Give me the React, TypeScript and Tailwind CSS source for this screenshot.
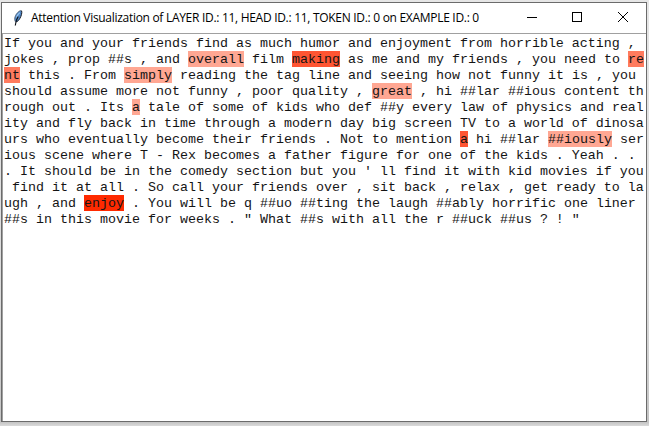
type Tone = "soft" | "mid" | "strong" | "full";
type Segment = string | [string, Tone];

const TONES: Record<Tone, string> = {
  soft: "bg-[#ffa793]",
  mid: "bg-[#ff7b5e]",
  strong: "bg-[#ff5533]",
  full: "bg-[#ff2a00]",
};

const LINES: Segment[][] = [
  ["If you and your friends find as much humor and enjoyment from horrible acting ,"],
  ["jokes , prop ##s , and ", ["overall", "soft"], " film ", ["making", "strong"], " as me and my friends , you need to ", ["re", "mid"]],
  [["nt", "mid"], " this . From ", ["simply", "soft"], " reading the tag line and seeing how not funny it is , you"],
  ["should assume more not funny , poor quality , ", ["great", "soft"], " , hi ##lar ##ious content th"],
  ["rough out . Its ", ["a", "soft"], " tale of some of kids who def ##y every law of physics and real"],
  ["ity and fly back in time through a modern day big screen TV to a world of dinosa"],
  ["urs who eventually become their friends . Not to mention ", ["a", "strong"], " hi ##lar ", ["##iously", "soft"], " ser"],
  ["ious scene where T - Rex becomes a father figure for one of the kids . Yeah . ."],
  [". It should be in the comedy section but you ' ll find it with kid movies if you"],
  [" find it at all . So call your friends over , sit back , relax , get ready to la"],
  ["ugh , and ", ["enjoy", "full"], " . You will be q ##uo ##ting the laugh ##ably horrific one liner"],
  ["##s in this movie for weeks . \" What ##s with all the r ##uck ##us ? ! \""],
];

function Feather() {
  return (
    <svg width="12" height="18" viewBox="0 0 12 18" className="shrink-0">
      <path d="M3.500 13C1.600 10 3 6 5.600 3.600 7.200 2 9 1 9.600 1.800c.6 2-.2 5-1.700 7.600-1.200 2-2.400 3.200-4.400 3.600z" fill="#4f86c6" />
      <path d="M3.200 12.500C1.800 9.500 3.400 6 5.800 3.400 7.400 1.800 8.800 1.200 9.500 1.800" fill="none" stroke="#5c6470" strokeWidth="0.8" />
      <path d="M9.600 1.800c.6 2-.2 5-1.700 7.600C6.800 11.300 5.600 12.500 3.900 13" fill="none" stroke="#141a24" strokeWidth="1" />
      <path d="M4.600 8.500C5.200 6.500 6.400 4.800 7.800 3.600" fill="none" stroke="#9cc8f2" strokeWidth="1.200" />
      <path d="M6.200 7.500C4.800 9.500 3.700 12 3.300 16.500" fill="none" stroke="#0c1016" strokeWidth="1.200" />
    </svg>
  );
}

function WindowControls() {
  return (
    <svg width="106" height="12" viewBox="0 0 106 12" fill="none" stroke="#000" strokeWidth="1" className="mb-[2px] shrink-0">
      <path d="M0 6.500h10" shapeRendering="crispEdges" />
      <rect x="45.500" y="1.500" width="9" height="9" shapeRendering="crispEdges" />
      <path d="M91 1l10 10M101 1L91 11" />
    </svg>
  );
}

export default function App() {
  return (
    <div className="h-[426px] w-[649px] overflow-hidden bg-[linear-gradient(to_bottom,#e6e6e6_0px,#dadada_300px,#c4c4c4_422px,#dadada_426px)] pt-[2px] pl-px">
      <div className="flex h-[420px] w-[646px] flex-col border border-[#6b6b6b] bg-white">
        <header className="flex h-[30px] shrink-0 items-center pl-[10px]">
          <Feather />
          <h1 className="ml-[7px] w-[496px] shrink-0 whitespace-pre font-['Open_Sans','Noto_Sans',sans-serif] text-[12px] leading-[16px] tracking-[-0.295px] text-black">
            Attention Visualization of LAYER ID.: 11, HEAD ID.: 11, TOKEN ID.: 0 on EXAMPLE ID.: 0
          </h1>
          <WindowControls />
        </header>
        <main className="grow border-t border-l border-[#a0a0a0] pt-px pl-px font-['Liberation_Mono',monospace] text-[13.333px] text-[#141414]">
          {LINES.map((line, i) => (
            <div key={i} className="flex h-4 whitespace-pre leading-[18px]">
              {line.map((seg, j) =>
                typeof seg === "string" ? (
                  <span key={j}>{seg}</span>
                ) : (
                  <mark key={j} className={`text-[#141414] ${TONES[seg[1]]}`}>
                    {seg[0]}
                  </mark>
                ),
              )}
            </div>
          ))}
        </main>
      </div>
    </div>
  );
}
